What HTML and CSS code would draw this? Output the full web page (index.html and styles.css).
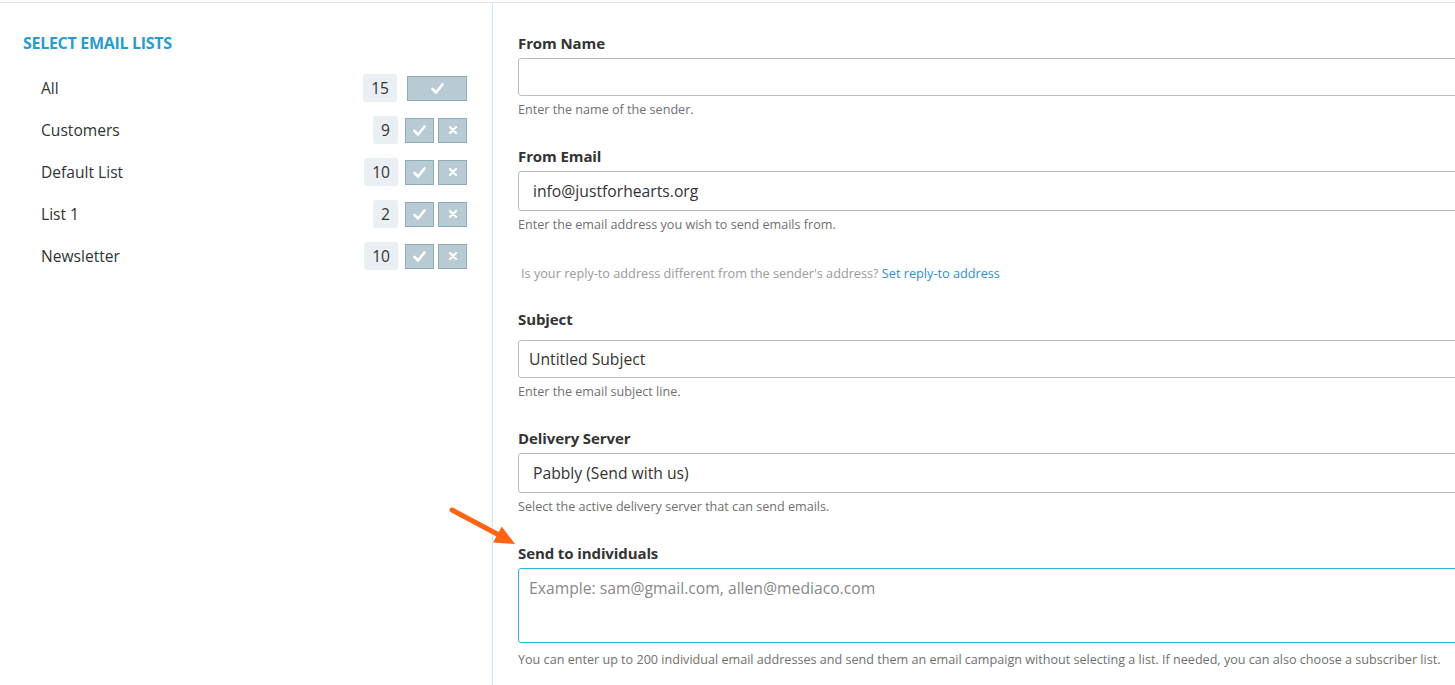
FILE: index.html
```html
<!DOCTYPE html>
<html lang="en">

<head>
  <meta charset="UTF-8">
  <meta name="viewport" content="width=device-width, initial-scale=1.0">
  <title>Campaign settings</title>
  <link rel="stylesheet" href="styles.css">
</head>

<body>
  <div class="l-page">
    <aside class="c-lists">
      <h2 class="c-lists__title">SELECT EMAIL LISTS</h2>
      <ul class="c-lists__items">
        <li class="c-lists__row">
          <span class="c-lists__name">All</span>
          <span class="c-lists__count">15</span>
          <span class="c-lists__actions">
            <button class="c-btn c-btn--wide" type="button" aria-label="Select all">
              <svg class="c-btn__icon" width="13" height="11" viewBox="0 0 13 11"><path d="M1.5 6 L5 9.5 L11.5 1.5" /></svg>
            </button>
          </span>
        </li>
        <li class="c-lists__row">
          <span class="c-lists__name">Customers</span>
          <span class="c-lists__count">9</span>
          <span class="c-lists__actions c-lists__actions--pair">
            <button class="c-btn" type="button" aria-label="Include">
              <svg class="c-btn__icon" width="13" height="11" viewBox="0 0 13 11"><path d="M1.5 6 L5 9.5 L11.5 1.5" /></svg>
            </button>
            <button class="c-btn" type="button" aria-label="Exclude">
              <svg class="c-btn__icon c-btn__icon--x" width="8" height="8" viewBox="0 0 8 8"><path d="M1 1 L7 7 M7 1 L1 7" /></svg>
            </button>
          </span>
        </li>
        <li class="c-lists__row">
          <span class="c-lists__name">Default List</span>
          <span class="c-lists__count">10</span>
          <span class="c-lists__actions c-lists__actions--pair">
            <button class="c-btn" type="button" aria-label="Include">
              <svg class="c-btn__icon" width="13" height="11" viewBox="0 0 13 11"><path d="M1.5 6 L5 9.5 L11.5 1.5" /></svg>
            </button>
            <button class="c-btn" type="button" aria-label="Exclude">
              <svg class="c-btn__icon c-btn__icon--x" width="8" height="8" viewBox="0 0 8 8"><path d="M1 1 L7 7 M7 1 L1 7" /></svg>
            </button>
          </span>
        </li>
        <li class="c-lists__row">
          <span class="c-lists__name">List 1</span>
          <span class="c-lists__count">2</span>
          <span class="c-lists__actions c-lists__actions--pair">
            <button class="c-btn" type="button" aria-label="Include">
              <svg class="c-btn__icon" width="13" height="11" viewBox="0 0 13 11"><path d="M1.5 6 L5 9.5 L11.5 1.5" /></svg>
            </button>
            <button class="c-btn" type="button" aria-label="Exclude">
              <svg class="c-btn__icon c-btn__icon--x" width="8" height="8" viewBox="0 0 8 8"><path d="M1 1 L7 7 M7 1 L1 7" /></svg>
            </button>
          </span>
        </li>
        <li class="c-lists__row">
          <span class="c-lists__name">Newsletter</span>
          <span class="c-lists__count">10</span>
          <span class="c-lists__actions c-lists__actions--pair">
            <button class="c-btn" type="button" aria-label="Include">
              <svg class="c-btn__icon" width="13" height="11" viewBox="0 0 13 11"><path d="M1.5 6 L5 9.5 L11.5 1.5" /></svg>
            </button>
            <button class="c-btn" type="button" aria-label="Exclude">
              <svg class="c-btn__icon c-btn__icon--x" width="8" height="8" viewBox="0 0 8 8"><path d="M1 1 L7 7 M7 1 L1 7" /></svg>
            </button>
          </span>
        </li>
      </ul>
    </aside>

    <main class="c-form">
      <div class="c-field">
        <label class="c-field__label" for="from-name">From Name</label>
        <input class="c-field__input" id="from-name" type="text">
        <p class="c-field__help">Enter the name of the sender.</p>
      </div>

      <div class="c-field">
        <label class="c-field__label" for="from-email">From Email</label>
        <input class="c-field__input c-field__input--tall c-field__input--indent" id="from-email" type="text" value="info@justforhearts.org">
        <p class="c-field__help">Enter the email address you wish to send emails from.</p>
      </div>

      <p class="c-form__reply">Is your reply-to address different from the sender's address? <a href="#">Set reply-to address</a></p>

      <div class="c-field">
        <label class="c-field__label c-field__label--loose" for="subject">Subject</label>
        <input class="c-field__input" id="subject" type="text" value="Untitled Subject">
        <p class="c-field__help">Enter the email subject line.</p>
      </div>

      <div class="c-field">
        <label class="c-field__label" for="server">Delivery Server</label>
        <div class="c-field__input c-field__input--tall c-field__input--indent c-field__select" id="server">Pabbly (Send with us)</div>
        <p class="c-field__help">Select the active delivery server that can send emails.</p>
      </div>

      <div class="c-field c-field--marked">
        <svg class="c-arrow" width="80" height="50" viewBox="0 0 80 50">
          <line x1="5" y1="5" x2="52" y2="30" stroke="#ff6412" stroke-width="5" stroke-linecap="round" />
          <polygon points="68,39 54.7,21.6 46.1,37.4" fill="#ff6412" />
        </svg>
        <label class="c-field__label" for="individuals">Send to individuals</label>
        <textarea class="c-field__input c-field__textarea" id="individuals" placeholder="Example: sam@gmail.com, allen@mediaco.com"></textarea>
        <p class="c-field__help c-field__help--far">You can enter up to 200 individual email addresses and send them an email campaign without selecting a list. If needed, you can also choose a subscriber list.</p>
      </div>
    </main>
  </div>
</body>

</html>
```

FILE: styles.css
```css
*,
*::before,
*::after {
  margin: 0;
  padding: 0;
  box-sizing: border-box;
}

html,
body {
  height: 100%;
  overflow: hidden;
}

body {
  font-family: "Open Sans", Lato, sans-serif;
  color: #333;
  background: #fff;
  padding-top: 2px;
}

.l-page {
  display: grid;
  grid-template-columns: 493px minmax(0, 1fr);
  height: 100%;
  border-top: 1px solid #e3e3e3;
}

/* LEFT: lists */
.c-lists {
  border-right: 1px solid #cfe3f2;
  padding: 30px 25px 0 23px;
}

.c-lists__title {
  font-size: 16px;
  font-weight: 700;
  line-height: 20px;
  color: #2a9ccb;
  letter-spacing: -.3px;
}

.c-lists__items {
  list-style: none;
  margin-top: 14px;
}

.c-lists__row {
  display: flex;
  align-items: center;
  height: 42px;
  padding-left: 18px;
}

.c-lists__name {
  flex: 1;
  font-size: 15.6px;
}

.c-lists__count {
  min-width: 24px;
  height: 28px;
  padding: 0 8px;
  border-radius: 3px;
  background: #eaeff3;
  font-size: 15.6px;
  line-height: 28px;
  text-align: center;
}

.c-lists__actions {
  display: flex;
  gap: 4px;
  margin-left: 10px;
}

.c-lists__actions--pair {
  margin-left: 7px;
}

.c-btn {
  display: flex;
  align-items: center;
  justify-content: center;
  width: 29px;
  height: 25px;
  border: 1px solid #8eabb8;
  background: #b8cbd4;
  cursor: pointer;
}

.c-btn--wide {
  width: 60px;
}

.c-btn__icon {
  fill: none;
  stroke: #fff;
  stroke-width: 2.6;
  stroke-linecap: round;
  stroke-linejoin: round;
}

.c-btn__icon--x {
  stroke-width: 2.2;
}

/* RIGHT: form */
.c-form {
  padding: 31px 0 0 25px;
}

.c-field {
  margin-bottom: 28px;
}

.c-field--marked {
  position: relative;
}

.c-field__label {
  display: block;
  font-size: 15px;
  font-weight: 700;
  line-height: 18px;
  margin-bottom: 6px;
  letter-spacing: -.1px;
}

.c-field__label--loose {
  margin-bottom: 12px;
}

.c-field__input {
  display: block;
  width: 1000px;
  height: 38px;
  padding: 0 10px;
  border: 1px solid #bdbdbd;
  border-radius: 3px;
  background: #fff;
  font-family: "Open Sans", Lato, sans-serif;
  font-size: 15.7px;
  color: #333;
  outline: none;
}

.c-field__input--tall {
  height: 40px;
}

.c-field__input--indent {
  padding-left: 14px;
}

.c-field__select {
  line-height: 38px;
}

.c-field__textarea {
  height: 75px;
  padding: 8px 10px;
  border-color: #29b5e3;
  resize: none;
}

.c-field__textarea::placeholder {
  color: #888;
}

.c-field__help {
  margin-top: 5px;
  font-size: 12.6px;
  line-height: 18px;
  color: #707070;
}

.c-field__help--far {
  margin-top: 8px;
}

.c-form__reply {
  margin: 30px 0 28px 3px;
  font-size: 12.7px;
  line-height: 18px;
  color: #9a9a9a;
}

.c-form__reply a {
  color: #2b8fd0;
  text-decoration: none;
}

.c-arrow {
  position: absolute;
  left: -71px;
  top: -39px;
}
```
